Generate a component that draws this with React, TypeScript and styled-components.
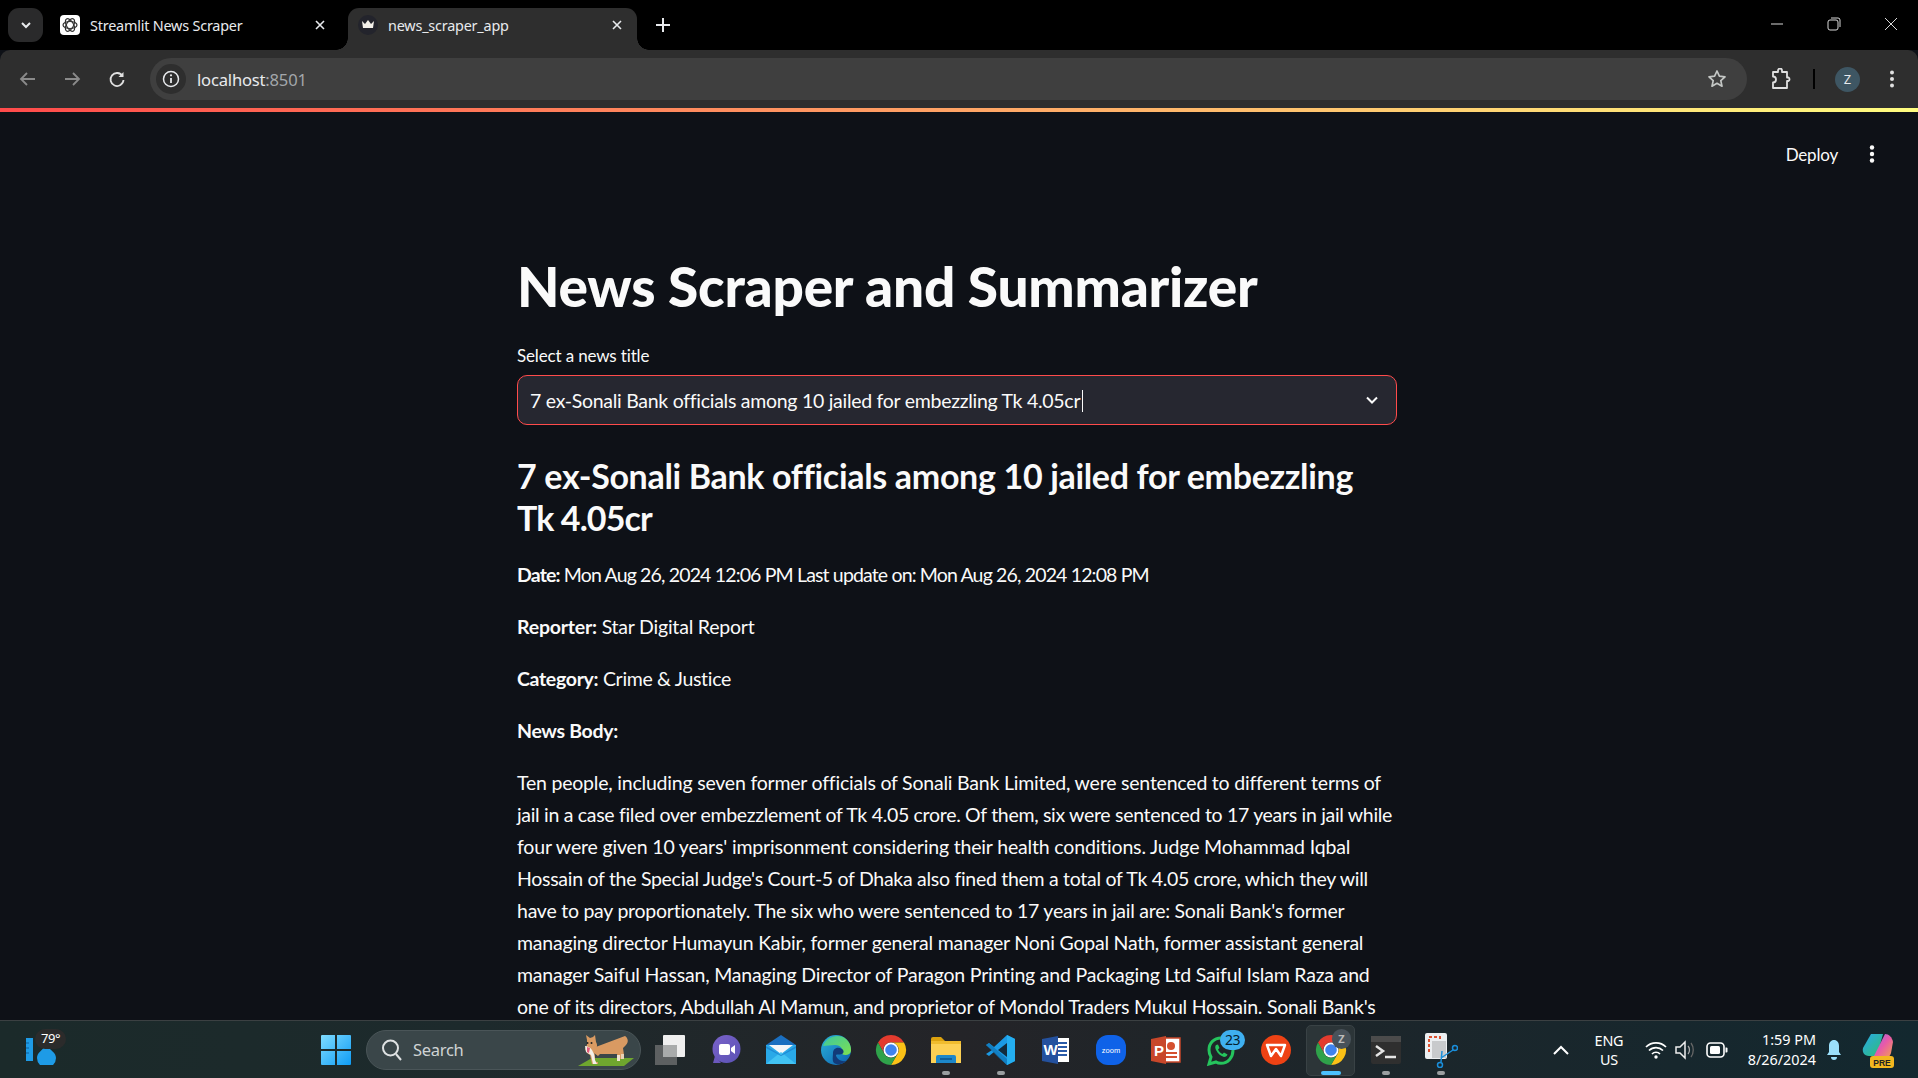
import React from "react";
import styled, { createGlobalStyle } from "styled-components";

const Global = createGlobalStyle`
  html, body { margin: 0; padding: 0; height: 100%; background: #0e1117; overflow: hidden; }
  #root { height: 100%; }
  * { box-sizing: border-box; }
`;
const UI = `"Noto Sans", "Open Sans", sans-serif`;
const BODY = `Lato, "Noto Sans", sans-serif`;

const Page = styled.div`height: 1078px; width: 1918px; display: flex; flex-direction: column; overflow: hidden; background: #0e1117;`;

const TabStrip = styled.div`height: 50px; background: #000; display: flex; align-items: flex-end; flex: none;`;
const TabMenu = styled.div`width: 35px; height: 34px; margin: 0 0 8px 8px; background: #2a2a2b; border-radius: 11px; display: flex; align-items: center; justify-content: center;`;
const Tab = styled.div<{ $active?: boolean }>`
  position: relative; height: 42px; display: flex; align-items: center;
  width: ${p => (p.$active ? 289 : 305)}px;
  padding: ${p => (p.$active ? "0 13px 8px 10px" : "0 21px 8px 17px")};
  background: ${p => (p.$active ? "#2e2e2e" : "transparent")};
  border-radius: 11px 11px 0 0;
  color: #e8eaed; font: 14.4px ${UI}; letter-spacing: -0.2px;
  ${p => p.$active && `
    &::before, &::after { content: ""; position: absolute; bottom: 0; width: 12px; height: 12px; }
    &::before { left: -12px; background: radial-gradient(circle at 0 0, #000 11.5px, #2e2e2e 12px); }
    &::after { right: -12px; background: radial-gradient(circle at 100% 0, #000 11.5px, #2e2e2e 12px); }
  `}
`;
const TabTitle = styled.span`flex: 1; margin-left: 10px; white-space: nowrap;`;
const NewTab = styled.div`margin: 0 0 8px 18px; height: 34px; display: flex; align-items: center;`;
const WindowControls = styled.div`margin-left: auto; height: 50px; display: flex; align-items: center; gap: 43px; padding: 0 20px 2px 0;`;

const Toolbar = styled.div`height: 58px; flex: none; background: #2e2e2e; border-radius: 10px 10px 0 0; display: flex; align-items: center; padding: 0 0 0 18px;`;
const NavIcons = styled.div`display: flex; align-items: center; gap: 24px; width: 132px; & > svg:last-child { margin-left: 1px; }`;
const Omnibox = styled.div`width: 1597px; height: 42px; border-radius: 21px; background: #3f3f3f; display: flex; align-items: center; padding: 0 20px 0 6px;`;
const InfoBadge = styled.div`width: 30px; height: 30px; border-radius: 50%; background: #2e2e2e; display: flex; align-items: center; justify-content: center;`;
const Url = styled.div`margin-left: 11px; flex: 1; font: 16.6px ${UI}; letter-spacing: -0.2px; color: #e8eaed; span { color: #a3a7ab; }`;
const ToolbarRight = styled.div`display: flex; align-items: center; margin-left: 23px;`;
const ToolDivider = styled.div`width: 2px; height: 20px; background: #000; margin: 0 20px 0 21px;`;
const Avatar = styled.div`width: 25px; height: 25px; border-radius: 50%; background: #3e5663; color: #e8eaed; font: 13px ${UI}; display: flex; align-items: center; justify-content: center;`;
const ToolDots = styled.div`margin-left: 29px; display: flex;`;

const Rainbow = styled.div`height: 4px; flex: none; background: linear-gradient(90deg, #ff4b4b, #fffd80);`;

const Main = styled.main`flex: 1; min-height: 0; overflow: hidden; padding-right: 4px; background: #0e1117; color: #fafafa;`;
const AppHeader = styled.div`height: 84px; display: flex; align-items: center; justify-content: flex-end; padding-right: 39px; gap: 31px; font: 17px ${BODY}; color: #fafafa;`;
const Deploy = styled.span`letter-spacing: -0.2px;`;
const Column = styled.div`width: 880px; margin: 0 auto; font: 19.5px/32px ${BODY}; letter-spacing: -0.21px;`;
const Title = styled.h1`margin: 57px 0 0; font: 900 55px/66px ${BODY}; letter-spacing: -0.25px; white-space: nowrap;`;
const FieldLabel = styled.label`display: block; margin-top: 27px; font: 17px/20px ${BODY}; letter-spacing: -0.15px;`;
const SelectBox = styled.div`margin-top: 9px; height: 50px; border: 1.5px solid #ff4b4b; border-radius: 10px; background: #262730; display: flex; align-items: center; padding: 0 16px 0 12px; font: 19.5px ${BODY};`;
const SelectValue = styled.span`flex: 1; white-space: nowrap; letter-spacing: -0.28px;`;
const Caret = styled.span`display: inline-block; width: 1px; height: 22px; background: #fafafa; vertical-align: -4px; margin-left: 2px;`;
const Subtitle = styled.h2`margin: 30px 0 0; font: 700 34px/42px ${BODY}; letter-spacing: -0.33px;`;
const Para = styled.p<{ $ls?: number }>`margin: 20px 0 0; letter-spacing: ${p => p.$ls ?? -0.21}px; white-space: nowrap;`;
const Line = styled.span<{ $ls?: number }>`display: block; white-space: nowrap; letter-spacing: ${p => p.$ls ?? -0.21}px;`;

const Taskbar = styled.footer`height: 58px; flex: none; border-top: 1px solid #3b4042; background: linear-gradient(90deg, #1b2a2a 0%, #1d2a2c 25%, #242428 50%, #1f2529 62%, #13282f 100%); display: flex; align-items: center; color: #fff; font: 15px ${UI};`;
const Weather = styled.div`position: relative; width: 321px; flex: none; height: 100%; padding-left: 26px; display: flex; align-items: center;`;
const Temp = styled.span`position: absolute; left: 35px; top: 8px; width: 31px; height: 20px; border-radius: 10px; background: #2b2b2b; color: #fff; font: 13px ${UI}; letter-spacing: -.4px; text-align: center; line-height: 19px;`;
const Center = styled.div`display: flex; align-items: center; height: 100%;`;
const StartSlot = styled.div`width: 45px; flex: none; display: flex;`;
const SearchPill = styled.div`position: relative; width: 275px; height: 40px; flex: none; border-radius: 20px; background: #3a4649; border: 1px solid #4a5558; display: flex; align-items: center; padding-left: 14px; gap: 10px; color: #cfd3d4; font: 16.5px ${UI}; letter-spacing: -.3px;`;
const Corgi = styled.span`position: absolute; right: 4px; top: 3px; display: flex;`;
const AppSlot = styled.div<{ $active?: boolean; $w?: number }>`
  position: relative; width: ${p => p.$w ?? 55}px; height: 100%; flex: none; display: flex; align-items: center; justify-content: center;
  ${p => p.$active && `&::before { content: ""; position: absolute; inset: 4px 3px 2px; border-radius: 5px; background: #2c3538; border: 1px solid #394245; }`}
  svg { position: relative; }
`;
const RunDot = styled.i<{ $active?: boolean }>`position: absolute; bottom: 3px; left: 50%; transform: translateX(-50%); height: 4px; border-radius: 2px; width: ${p => (p.$active ? 20 : 8)}px; background: ${p => (p.$active ? "#4cc2ff" : "#9b9fa1")};`;
const Badge = styled.b`position: absolute; top: 9px; left: 27px; width: 25px; height: 20px; border-radius: 10px; background: #3fb0f0; color: #06202e; font: 400 14px/20px ${UI}; letter-spacing: -.5px; text-align: center;`;
const ProfileMini = styled.b`position: absolute; top: 8px; left: 29px; width: 19px; height: 20px; border-radius: 10px; background: #48525a; color: #bbb; font: 700 11px/20px ${UI}; text-align: center;`;
const Tray = styled.div`margin-left: auto; display: flex; align-items: center; height: 100%; padding-right: 23px;`;
const Lang = styled.div`width: 50px; margin: 0 0 0 14px; text-align: center; font: 14.4px/19px ${UI}; letter-spacing: -.2px;`;
const TrayIcons = styled.div`display: flex; align-items: center; gap: 11px; margin-left: 11px; & > svg:first-child { margin-right: -3px; }`;
const Clock = styled.div`width: 80px; margin-left: 8px; text-align: right; font: 14.4px/20px ${UI}; white-space: nowrap;`;
const TrayEnd = styled.div`display: flex; align-items: center; gap: 19px; margin-left: 10px;`;

const S = ({ w = 32, h = 32, vb, children }: { w?: number; h?: number; vb?: string; children: React.ReactNode }) => (
  <svg width={w} height={h} viewBox={vb ?? `0 0 ${w} ${h}`} fill="none">{children}</svg>
);

const Chrome = () => (
  <S w={32} h={32}>
    <path d="M3 8.5A15 15 0 0 1 29 8.5L16 8.5A7.5 7.5 0 0 0 9.5 20Z" fill="#e33b2e" />
    <path d="M29 8.5A15 15 0 0 1 16 31L22.5 20A7.5 7.5 0 0 0 16 8.5Z" fill="#fbc116" />
    <path d="M16 31A15 15 0 0 1 3 8.5L9.5 20A7.5 7.5 0 0 0 22.5 20Z" fill="#2fa24a" />
    <circle cx="16" cy="16" r="7.5" fill="#fff" /><circle cx="16" cy="16" r="5.8" fill="#3f83ee" />
  </S>
);
const Meet = () => (
  <S><defs><linearGradient id="mt" x1="0" y1="0" x2="1" y2="1"><stop stopColor="#7a62c9" /><stop offset="1" stopColor="#5a52b5" /></linearGradient></defs>
    <circle cx="16.5" cy="15" r="14" fill="url(#mt)" /><path d="M3 29h8L5 22z" fill="#6b58bd" />
    <rect x="9" y="10" width="11" height="11" rx="2" fill="#fff" /><path d="M21 14l4-3v9l-4-3z" fill="#fff" /></S>
);
const Mail = () => (
  <S><path d="M1 11L16 1l15 10v19H1z" fill="#1a6fc0" /><path d="M1 11h30v19H1z" fill="#29a9e8" /><path d="M4 11h24L16 20z" fill="#f4f6f8" /><path d="M1 30l15-12 15 12z" fill="#42c3f3" /><path d="M1 12l15 9 15-9v2L16 22 1 14z" fill="#1f8ad4" /></S>
);
const Edge = () => (
  <S><defs><linearGradient id="eg" x1="0" y1="0" x2="1" y2="1"><stop stopColor="#2bb3d9" /><stop offset="1" stopColor="#0d5fb0" /></linearGradient><linearGradient id="eg2" x1="0" y1="0" x2="1" y2="1"><stop stopColor="#3cc8a0" /><stop offset="1" stopColor="#7ee04f" /></linearGradient></defs>
    <circle cx="16" cy="16" r="15" fill="url(#eg)" />
    <path d="M3 12C6 3 16 0 23 3c6 3 8.500 9 8 14-.5 4-6 5-9 3 2-4-1-9-7-9-5 0-9 1-12 1z" fill="url(#eg2)" />
    <path d="M13 19c0-4 4-7 9-4 3 2 1 5 0 5-3 1-5 0-6 1 0 3 4 7 10 6-4 4-9 4-12 2-2-2-1-7-1-10z" fill="#123a78" /></S>
);
const Explorer = () => (
  <S w={32} h={30}><path d="M1 4a2 2 0 0 1 2-2h8l4 4h-14z" fill="#dca20e" /><path d="M1 7h30v21H1z" fill="#fcd054" /><rect x="1" y="6" width="30" height="3" fill="#f0bc2e" /><path d="M6 28v-6a2 2 0 0 1 2-2h16a2 2 0 0 1 2 2v6z" fill="#1d87c9" /><rect x="10" y="23" width="12" height="2" fill="#0d5f9c" /></S>
);
const VSCode = () => (
  <S><path d="M22 1l8 4v22l-8 4-13-13-5 4-3-2 6-4-6-5 3-2 5 4z" fill="#1b9ae5" /><path d="M22 9l-9 7 9 7z" fill="#121f2a" opacity=".9" /><path d="M22 1l8 4v22l-8 4z" fill="#24aef0" /><path d="M1 11l3-2 18 16v6l-8-7z" fill="#0e73b5" opacity=".7" /></S>
);
const Word = () => (
  <S><rect x="9" y="4" width="20" height="24" fill="#fff" /><path d="M14 9h13M14 13h13M14 17h13M14 21h13" stroke="#2a5ba8" strokeWidth="2" /><path d="M2 5l16-3v28L2 27z" fill="#24519e" /><text x="3.500" y="21" fontFamily="Liberation Sans, sans-serif" fontWeight="700" fontSize="15" fill="#fff">W</text></S>
);
const Zoom = () => (
  <S><rect x="1" y="1" width="30" height="30" rx="12" fill="#0f62e8" /><text x="16" y="18.500" textAnchor="middle" fontFamily="Liberation Sans, sans-serif" fontSize="7.500" fill="#fff">zoom</text></S>
);
const Ppt = () => (
  <S><rect x="12" y="4" width="18" height="24" fill="#fff" /><rect x="12" y="4" width="18" height="24" stroke="#c8472a" strokeWidth="1.500" /><circle cx="21" cy="12" r="4" fill="#d4502f" /><path d="M16 19h11M16 23h11" stroke="#d4502f" strokeWidth="2" /><path d="M1 5l15-3v28L1 27z" fill="#c8472a" /><text x="4" y="22" fontFamily="Liberation Sans, sans-serif" fontWeight="700" fontSize="15" fill="#fff">P</text></S>
);
const WhatsApp = () => (
  <S><path d="M16 4C9 4 4 9 4 16c0 2.500.7 5 2 7L4 30l7-2c1.500 1 3.300 1.300 5 1.300 7 0 12-6 12-13S23 4 16 4z" stroke="#25c45d" strokeWidth="3" /><path d="M11 11c-1 1-1 3 0 5 2 4 5 6 8 7 2 0 3-1 3.500-2.500L19 18.500l-1.500 1.500c-2-1-3.500-2.500-4.500-4.500l1.500-1.500L13 10.500z" fill="#25c45d" /></S>
);
const Wps = () => (
  <S><ellipse cx="16" cy="16" rx="15" ry="15" fill="#ee4214" /><path d="M7 11h18l-4 11-5-7-5 7z" stroke="#fff" strokeWidth="2.500" strokeLinejoin="round" /></S>
);
const Terminal = () => (
  <S><rect x="1" y="2" width="30" height="28" rx="2" fill="#2f2f2f" /><rect x="1" y="2" width="30" height="6" fill="#4b4b4b" /><path d="M6 12l7 5-7 5" stroke="#e4e4e4" strokeWidth="2.500" /><path d="M15 23h11" stroke="#e4e4e4" strokeWidth="2.500" /></S>
);
const Snip = () => (
  <S w={34} h={36}><rect x="1" y="1" width="22" height="26" rx="2" fill="#eceff1" /><rect x="5" y="5" width="11" height="14" stroke="#dd5230" strokeWidth="2" strokeDasharray="3 2" /><rect x="8" y="9" width="14" height="17" fill="#c8cacc" /><circle cx="31" cy="16" r="2.500" stroke="#1a8fdc" strokeWidth="1.500" /><circle cx="16" cy="33" r="2.500" stroke="#1a8fdc" strokeWidth="1.500" /><path d="M29 18L17 26M17 30l1-11" stroke="#1a8fdc" strokeWidth="1.500" /></S>
);
const Copilot = () => (
  <S w={34} h={38}><defs><linearGradient id="cp1" x1="0" y1="0" x2="1" y2="1"><stop stopColor="#28a8ea" /><stop offset="1" stopColor="#2fbf71" /></linearGradient><linearGradient id="cp2" x1="0" y1="0" x2="1" y2="1"><stop stopColor="#8e6af0" /><stop offset=".5" stopColor="#e85aa8" /><stop offset="1" stopColor="#f4a64a" /></linearGradient></defs>
    <path d="M10 3h12l-6 22H8C3 25 1 21 2 17z" fill="url(#cp1)" /><path d="M24 3c4 0 7 3 8 8l-2 11c-1 4-4 5-8 5H12z" fill="url(#cp2)" /><rect x="9" y="25" width="24" height="12" rx="3" fill="#f3b71f" /><text x="21" y="34.500" textAnchor="middle" fontFamily="Liberation Sans, sans-serif" fontWeight="700" fontSize="8.500" fill="#222">PRE</text></S>
);
const Dog = () => (
  <S w={60} h={34}>
    <path d="M2 32L16 24H58L48 32z" fill="#6fa62e" />
    <path d="M49 2c3 2 4 6 1 9l-3 3 1 7-3 4h-3l-1-5H24l-2 2-4-3-1-5z" fill="#d99a62" />
    <rect x="41" y="21" width="3" height="6" fill="#f0e3d2" /><rect x="45" y="20" width="3" height="5" fill="#e8d2b6" />
    <path d="M11 6L10 1l4 3 3-1 2-2 1 7c2 3 1 7-2 9l1 5v6h3v2h-6l-2-9-3-2-2-4 2-4z" fill="#d99a62" />
    <path d="M9 12c2 0 5 1 7 4l2 4 1 6 2 4h-4l-2-9-5-3z" fill="#f3efe8" />
    <circle cx="11.500" cy="9" r="1" fill="#222" /><circle cx="15.500" cy="9" r="1" fill="#222" /><path d="M11 13l3 1-1 5-2-1z" fill="#e35a7a" />
  </S>
);

const App = () => (
  <Page>
    <Global />
    <TabStrip>
      <TabMenu><S w={14} h={14}><path d="M3 5l4 4 4-4" stroke="#e8eaed" strokeWidth="2" /></S></TabMenu>
      <Tab>
        <S w={20} h={20}><rect width="20" height="20" rx="4" fill="#fff" /><g stroke="#333" strokeWidth="1.200"><ellipse cx="10" cy="10" rx="7" ry="3.500" /><ellipse cx="10" cy="10" rx="7" ry="3.500" transform="rotate(60 10 10)" /><ellipse cx="10" cy="10" rx="7" ry="3.500" transform="rotate(120 10 10)" /></g></S>
        <TabTitle>Streamlit News Scraper</TabTitle>
        <S w={14} h={14}><path d="M3 3l8 8M11 3l-8 8" stroke="#e8eaed" strokeWidth="1.600" /></S>
      </Tab>
      <Tab $active>
        <S w={20} h={20}><circle cx="10" cy="10" r="10" fill="#23242c" /><path d="M4 6l3 3 3-4 3 4 3-3-1 7H5z" fill="#f4f1ea" /></S>
        <TabTitle>news_scraper_app</TabTitle>
        <S w={14} h={14}><path d="M3 3l8 8M11 3l-8 8" stroke="#e8eaed" strokeWidth="1.600" /></S>
      </Tab>
      <NewTab><S w={16} h={16}><path d="M8 1v14M1 8h14" stroke="#e8eaed" strokeWidth="2" /></S></NewTab>
      <WindowControls>
        <S w={14} h={14}><path d="M1 7h12" stroke="#d8d8d8" /></S>
        <S w={14} h={14}><rect x="1" y="3" width="10" height="10" rx="2" stroke="#d8d8d8" /><path d="M4 1h7a2 2 0 0 1 2 2v7" stroke="#d8d8d8" /></S>
        <S w={14} h={14}><path d="M1 1l12 12M13 1L1 13" stroke="#d8d8d8" /></S>
      </WindowControls>
    </TabStrip>
    <Toolbar>
      <NavIcons>
        <S w={20} h={20}><path d="M17 10H3M9 4l-6 6 6 6" stroke="#8a8a8a" strokeWidth="1.800" /></S>
        <S w={20} h={20}><path d="M3 10h14M11 4l6 6-6 6" stroke="#8a8a8a" strokeWidth="1.800" /></S>
        <S w={20} h={20}><path d="M15.500 7A6.500 6.500 0 1 0 16.500 11" stroke="#e0e0e0" strokeWidth="1.800" /><path d="M16.500 3v5h-5z" fill="#e0e0e0" /></S>
      </NavIcons>
      <Omnibox>
        <InfoBadge><S w={18} h={18}><circle cx="9" cy="9" r="7.500" stroke="#e8eaed" strokeWidth="1.500" /><path d="M9 8v5" stroke="#e8eaed" strokeWidth="1.800" /><circle cx="9" cy="5.300" r="1.100" fill="#e8eaed" /></S></InfoBadge>
        <Url>localhost<span>:8501</span></Url>
        <S w={20} h={20}><path d="M10 2l2.400 5.200 5.600.6-4.200 3.800 1.200 5.600-5-2.900-5 2.900 1.200-5.600L2 7.800l5.600-.6z" stroke="#c4c7c5" strokeWidth="1.700" strokeLinejoin="round" /></S>
      </Omnibox>
      <ToolbarRight>
        <S w={22} h={22}><path d="M3 4h5V2.500a2 2 0 0 1 4 0V4h5v5.500h1.500a2 2 0 0 1 0 3.500H17v7H3v-5.500a3 3 0 0 0 0-6z" stroke="#e0e0e0" strokeWidth="1.800" strokeLinejoin="round" /></S>
        <ToolDivider />
        <Avatar>Z</Avatar>
        <ToolDots><S w={6} h={20}><circle cx="3" cy="3.500" r="2" fill="#e0e0e0" /><circle cx="3" cy="10" r="2" fill="#e0e0e0" /><circle cx="3" cy="16.500" r="2" fill="#e0e0e0" /></S></ToolDots>
      </ToolbarRight>
    </Toolbar>
    <Rainbow />
    <Main>
      <AppHeader>
        <Deploy>Deploy</Deploy>
        <S w={6} h={20}><circle cx="3" cy="3.500" r="2.200" fill="#fafafa" /><circle cx="3" cy="10" r="2.200" fill="#fafafa" /><circle cx="3" cy="16.500" r="2.200" fill="#fafafa" /></S>
      </AppHeader>
      <Column>
        <Title>News Scraper and Summarizer</Title>
        <FieldLabel>Select a news title</FieldLabel>
        <SelectBox>
          <SelectValue>7 ex-Sonali Bank officials among 10 jailed for embezzling Tk 4.05cr<Caret /></SelectValue>
          <S w={16} h={16}><path d="M3 5.500l5 5 5-5" stroke="#fafafa" strokeWidth="2" /></S>
        </SelectBox>
        <Subtitle>
          <Line $ls={-0.33}>7 ex-Sonali Bank officials among 10 jailed for embezzling</Line>
          <Line $ls={-0.9}>Tk 4.05cr</Line>
        </Subtitle>
        <Para $ls={-0.85}><b>Date:</b> Mon Aug 26, 2024 12:06 PM Last update on: Mon Aug 26, 2024 12:08 PM</Para>
        <Para><b>Reporter:</b> Star Digital Report</Para>
        <Para $ls={-0.32}><b>Category:</b> Crime &amp; Justice</Para>
        <Para $ls={-0.32}><b>News Body:</b></Para>
        <Para>
          <Line>Ten people, including seven former officials of Sonali Bank Limited, were sentenced to different terms of</Line>
          <Line $ls={-0.31}>jail in a case filed over embezzlement of Tk 4.05 crore. Of them, six were sentenced to 17 years in jail while</Line>
          <Line $ls={-0.17}>four were given 10 years' imprisonment considering their health conditions. Judge Mohammad Iqbal</Line>
          <Line $ls={-0.29}>Hossain of the Special Judge's Court-5 of Dhaka also fined them a total of Tk 4.05 crore, which they will</Line>
          <Line $ls={-0.25}>have to pay proportionately. The six who were sentenced to 17 years in jail are: Sonali Bank's former</Line>
          <Line>managing director Humayun Kabir, former general manager Noni Gopal Nath, former assistant general</Line>
          <Line $ls={-0.19}>manager Saiful Hassan, Managing Director of Paragon Printing and Packaging Ltd Saiful Islam Raza and</Line>
          <Line $ls={-0.24}>one of its directors, Abdullah Al Mamun, and proprietor of Mondol Traders Mukul Hossain. Sonali Bank's</Line>
        </Para>
      </Column>
    </Main>
    <Taskbar>
      <Weather>
        <S w={30} h={30}><rect x="0" y="3" width="7" height="23" fill="#1e9be6" /><path d="M0 8h3M0 13h3M0 18h3" stroke="#0d5f9c" /><path d="M20 11c5 4 10 7 10 12a9 9 0 0 1-19 0c0-5 5-8 9-12z" fill="#1e9be6" /></S>
        <Temp>79°</Temp>
      </Weather>
      <Center>
        <StartSlot><S w={30} h={30}><defs><linearGradient id="wn" x1="0" y1="0" x2="1" y2="1"><stop stopColor="#7fdcff" /><stop offset="1" stopColor="#0f9cf5" /></linearGradient></defs><path d="M0 1a1 1 0 0 1 1-1h13v14H0zM16 0h13a1 1 0 0 1 1 1v13H16zM0 16h14v14H1a1 1 0 0 1-1-1zM16 16h14v13a1 1 0 0 1-1 1H16z" fill="url(#wn)" /></S></StartSlot>
        <SearchPill>
          <S w={22} h={24}><circle cx="9.500" cy="10" r="7.500" stroke="#dfe2e3" strokeWidth="2" /><path d="M15 16l5 6" stroke="#dfe2e3" strokeWidth="2" /></S>
          Search
          <Corgi><Dog /></Corgi>
        </SearchPill>
        <AppSlot $w={58}><S w={30} h={30}><rect x="0" y="10" width="22" height="20" fill="#5d6061" /><rect x="8" y="0" width="22" height="22" rx="1" fill="#efefef" /><rect x="8" y="10" width="14" height="12" fill="#a9abab" /></S></AppSlot>
        <AppSlot $w={54}><Meet /></AppSlot>
        <AppSlot><Mail /></AppSlot>
        <AppSlot><Edge /></AppSlot>
        <AppSlot><Chrome /></AppSlot>
        <AppSlot><Explorer /><RunDot /></AppSlot>
        <AppSlot><VSCode /><RunDot /></AppSlot>
        <AppSlot><Word /></AppSlot>
        <AppSlot><Zoom /></AppSlot>
        <AppSlot><Ppt /></AppSlot>
        <AppSlot><WhatsApp /><Badge>23</Badge></AppSlot>
        <AppSlot><Wps /></AppSlot>
        <AppSlot $active><Chrome /><ProfileMini>Z</ProfileMini><RunDot $active /></AppSlot>
        <AppSlot><Terminal /><RunDot /></AppSlot>
        <AppSlot><Snip /><RunDot /></AppSlot>
      </Center>
      <Tray>
        <S w={18} h={12}><path d="M2 10l7-7 7 7" stroke="#fff" strokeWidth="2" /></S>
        <Lang>ENG<br />US</Lang>
        <TrayIcons>
          <S w={22} h={18}><path d="M1 6a14 14 0 0 1 20 0M4 9.500a10 10 0 0 1 14 0M7 13a5.500 5.500 0 0 1 8 0" stroke="#fff" strokeWidth="1.700" /><circle cx="11" cy="16" r="1.700" fill="#fff" /></S>
          <S w={20} h={22}><path d="M1 8h4l5-5v16l-5-5H1z" stroke="#eee" strokeWidth="1.500" /><path d="M13 7c2 2 2 6 0 8" stroke="#aaa" strokeWidth="1.300" /><path d="M16 4c3 4 3 10 0 14" stroke="#666" strokeWidth="1.300" /></S>
          <S w={22} h={16}><rect x="1" y="1" width="17" height="14" rx="3.500" stroke="#fff" strokeWidth="1.600" /><rect x="4" y="4" width="10" height="8" rx="1.500" fill="#fff" /><path d="M19.500 5.500h1a1 1 0 0 1 1 1v3a1 1 0 0 1-1 1h-1z" fill="#fff" /></S>
        </TrayIcons>
        <Clock>1:59 PM<br />8/26/2024</Clock>
        <TrayEnd>
          <S w={16} h={22}><path d="M8 1c3 0 5 2.500 5 6v6l2 3H1l2-3V7c0-3.500 2-6 5-6z" fill="#9be0fb" /><path d="M5 18a3 3 0 0 0 6 0z" fill="#9be0fb" /></S>
          <Copilot />
        </TrayEnd>
      </Tray>
    </Taskbar>
  </Page>
);
export default App;
